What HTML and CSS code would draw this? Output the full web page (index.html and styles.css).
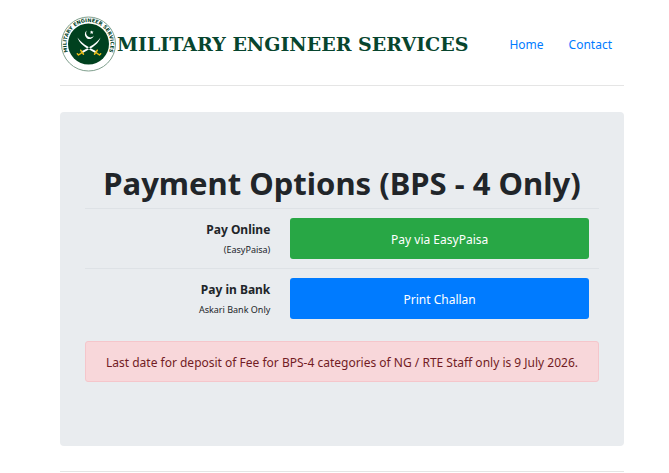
FILE: index.html
```html
<!DOCTYPE html>
<html lang="en">
<head>
<meta charset="utf-8">
<meta name="viewport" content="width=device-width, initial-scale=1">
<title>Military Engineer Services</title>
<link rel="stylesheet" href="styles.css">
</head>
<body>
<div class="container">
  <header class="header">
    <div class="brand">
      <svg class="badge" viewBox="0 0 56 56" aria-hidden="true">
        <defs><path id="ring" d="M7 34.5A22 22 0 1 1 49 34.5"/></defs>
        <circle cx="28" cy="28" r="27" fill="#fff" stroke="#7f9f8d"/>
        <text class="ring-text"><textPath href="#ring" startOffset="50%" text-anchor="middle">MILITARY ENGINEER SERVICES</textPath></text>
        <circle cx="28" cy="28" r="20.5" fill="#00411f"/>
        <path d="M26.4 14.6A4.6 4.6 0 1 0 33.4 19.6A4.1 4.1 0 1 1 26.4 14.6Z" fill="#fff"/>
        <path d="M31.2 14.4l.5 1.2 1.4.1-1 .9.3 1.4-1.2-.7-1.2.7.3-1.4-1-.9 1.3-.1z" fill="#fff"/>
        <path d="M17 21.5C18.5 27 24 31.5 35.2 37.2L36.4 35.6C26.5 30.5 20.8 27 17 21.5ZM40 21.5C38.5 27 33 31.5 21.8 37.2L20.6 35.6C30.5 30.5 36.2 27 40 21.5Z" fill="#fff"/>
        <path d="M20.2 34.2l2.8 4M36.8 34.2l-2.8 4M21.4 36.6l-3.4 2.4-1.2-1.2M35.6 36.6l3.4 2.4 1.2-1.2" fill="none" stroke="#e8ba19" stroke-width="1.5" stroke-linecap="round" stroke-linejoin="round"/>
      </svg>
      <span class="wordmark">MILITARY ENGINEER SERVICES</span>
    </div>
    <nav class="nav">
      <a href="#">Home</a>
      <a href="#">Contact</a>
    </nav>
  </header>
  <main class="panel">
    <h1>Payment Options (BPS - 4 Only)</h1>
    <table class="options">
      <tr>
        <th scope="row">Pay Online<small>(EasyPaisa)</small></th>
        <td><button class="btn btn-success" type="button">Pay via EasyPaisa</button></td>
      </tr>
      <tr>
        <th scope="row">Pay in Bank<small>Askari Bank Only</small></th>
        <td><button class="btn btn-primary" type="button">Print Challan</button></td>
      </tr>
    </table>
    <div class="alert" role="alert">Last date for deposit of Fee for BPS-4 categories of NG / RTE Staff only is 9 July 2026.</div>
  </main>
  <footer class="footer"></footer>
</div>
</body>
</html>
```
FILE: styles.css
```css
* { box-sizing: border-box; }

body {
  margin: 0;
  background: #fff;
  color: #212529;
  font-family: "Noto Sans", "Open Sans", sans-serif;
  font-size: 12px;
  line-height: 20px;
}

.container { padding: 16px 45px 0 60px; }

.header {
  display: flex;
  align-items: center;
  justify-content: space-between;
  padding-bottom: 13px;
  border-bottom: 1px solid #e5e5e5;
}

.brand { display: flex; align-items: center; }

.badge { width: 57px; height: 56px; }

.ring-text {
  fill: #00411f;
  font: bold 5px "DejaVu Sans", sans-serif;
}

.wordmark {
  color: #07452e;
  font: bold 19px/24px "DejaVu Serif", serif;
  white-space: nowrap;
}

.nav { display: flex; gap: 25px; padding: 2px 12px 0 0; }

.nav a { color: #007bff; text-decoration: none; }

.panel {
  margin-top: 26px;
  padding: 51px 25px 64px;
  border-radius: 4px;
  background: #e9ecef;
  text-align: center;
}

h1 {
  margin: 0 0 5px;
  font-size: 31px;
  line-height: 40px;
  white-space: nowrap;
}

.options {
  width: 100%;
  border-collapse: separate;
  border-spacing: 0;
  table-layout: fixed;
}

.options th,
.options td {
  padding: 9px 10px;
  border-top: 1px solid #dee2e6;
  vertical-align: middle;
}

.options th { width: 38%; padding-top: 10px; padding-bottom: 8px; text-align: right; }

.options small { display: block; font-size: 9px; font-weight: normal; }

.btn {
  display: block;
  width: 100%;
  height: 41px;
  padding: 2px 6px 0;
  border: 0;
  border-radius: 3px;
  color: #fff;
  font: inherit;
  cursor: pointer;
}

.btn-success { background: #28a745; }
.btn-primary { background: #007bff; }

.alert {
  margin-top: 13px;
  padding: 11px 0 8px;
  border: 1px solid #f5c6cb;
  border-radius: 3px;
  background: #f8d7da;
  color: #721c24;
  white-space: nowrap;
}

.footer {
  margin-top: 25px;
  border-top: 1px solid #e5e5e5;
}
```
